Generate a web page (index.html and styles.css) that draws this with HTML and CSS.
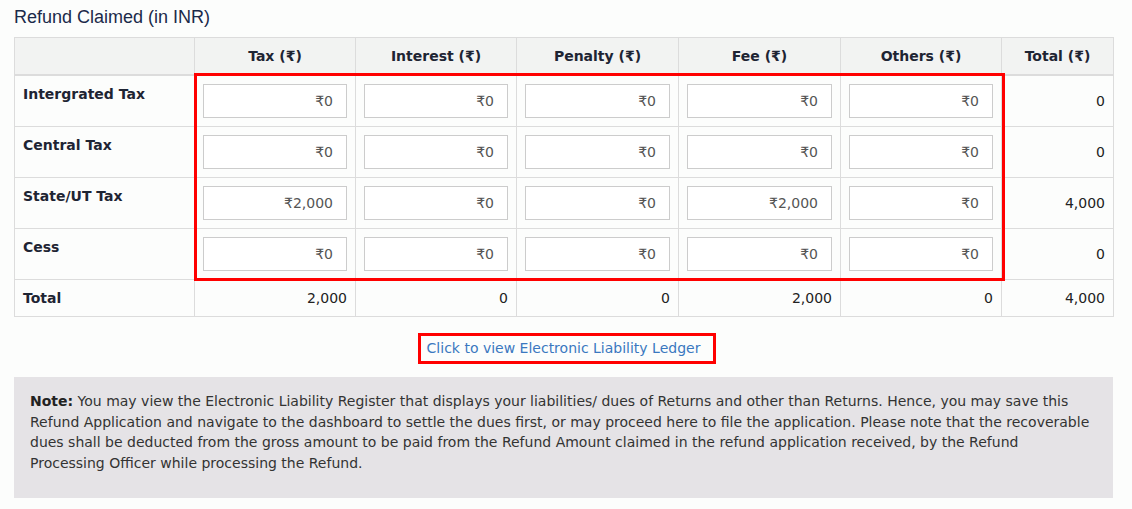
FILE: index.html
```html
<!DOCTYPE html>
<html>
<head>
<meta charset="utf-8">
<link rel="stylesheet" href="styles.css">
</head>
<body>
<div class="page">
  <h4 class="title">Refund Claimed (in INR)</h4>
  <div class="table-wrap">
    <table class="grid">
      <colgroup>
        <col class="c-label"><col class="c-amt"><col class="c-amt"><col class="c-amt2"><col class="c-amt2"><col class="c-amt"><col class="c-total">
      </colgroup>
      <thead>
        <tr><th></th><th>Tax (₹)</th><th>Interest (₹)</th><th>Penalty (₹)</th><th>Fee (₹)</th><th>Others (₹)</th><th>Total (₹)</th></tr>
      </thead>
      <tbody>
        <tr>
          <td class="lbl">Intergrated Tax</td>
          <td><input class="amt" value="₹0"></td><td><input class="amt" value="₹0"></td><td><input class="amt" value="₹0"></td><td><input class="amt" value="₹0"></td><td><input class="amt" value="₹0"></td>
          <td class="num">0</td>
        </tr>
        <tr>
          <td class="lbl">Central Tax</td>
          <td><input class="amt" value="₹0"></td><td><input class="amt" value="₹0"></td><td><input class="amt" value="₹0"></td><td><input class="amt" value="₹0"></td><td><input class="amt" value="₹0"></td>
          <td class="num">0</td>
        </tr>
        <tr>
          <td class="lbl">State/UT Tax</td>
          <td><input class="amt" value="₹2,000"></td><td><input class="amt" value="₹0"></td><td><input class="amt" value="₹0"></td><td><input class="amt" value="₹2,000"></td><td><input class="amt" value="₹0"></td>
          <td class="num">4,000</td>
        </tr>
        <tr>
          <td class="lbl">Cess</td>
          <td><input class="amt" value="₹0"></td><td><input class="amt" value="₹0"></td><td><input class="amt" value="₹0"></td><td><input class="amt" value="₹0"></td><td><input class="amt" value="₹0"></td>
          <td class="num">0</td>
        </tr>
        <tr class="total-row">
          <td class="lbl">Total</td>
          <td class="num">2,000</td><td class="num">0</td><td class="num">0</td><td class="num">2,000</td><td class="num">0</td><td class="num">4,000</td>
        </tr>
      </tbody>
    </table>
    <div class="highlight"></div>
  </div>
  <div class="link-row"><a class="ledger-link" href="#">Click to view Electronic Liability Ledger</a></div>
  <div class="note">
    <p><b>Note:</b> You may view the Electronic Liability Register that displays your liabilities/ dues of Returns and other than Returns. Hence, you may save this Refund Application and navigate to the dashboard to settle the dues first, or may proceed here to file the application. Please note that the recoverable dues shall be deducted from the gross amount to be paid from the Refund Amount claimed in the refund application received, by the Refund Processing Officer while processing the Refund.</p>
  </div>
</div>
</body>
</html>
```
FILE: styles.css
```css
html, body {
  margin: 0;
  padding: 0;
  background: #fcfdfc;
}
body {
  font-family: "DejaVu Sans", Verdana, sans-serif;
  font-size: 14px;
  color: #1e2433;
}
.page {
  width: 1099px;
  margin-left: 14px;
}
.title {
  margin: 0;
  padding-top: 7px;
  height: 37px;
  font-family: "Liberation Sans", Arial, sans-serif;
  font-weight: normal;
  font-size: 18px;
  line-height: 20px;
  color: #1b2a4a;
  box-sizing: border-box;
}
.table-wrap {
  position: relative;
}
.grid {
  width: 1099px;
  table-layout: fixed;
  border-collapse: collapse;
  border: 1px solid #dcdcdc;
}
.c-label { width: 180px; }
.c-amt { width: 161px; }
.c-amt2 { width: 162px; }
.c-total { width: 112px; }
.grid th, .grid td {
  border: 1px solid #dcdcdc;
  padding: 8px;
}
.grid th {
  background: #f2f3f2;
  font-weight: bold;
  text-align: center;
  border-bottom: 2px solid #dcdcdc;
  line-height: 20px;
  color: #1e2433;
}
.grid tbody td {
  line-height: 20px;
}
.grid td.lbl {
  vertical-align: top;
  font-weight: bold;
  padding-top: 8px;
}
.grid td.num {
  text-align: right;
  vertical-align: middle;
  color: #222;
}
.grid tr.total-row td {
  padding-top: 8px;
  padding-bottom: 8px;
  vertical-align: middle;
}
.amt {
  display: block;
  width: 100%;
  height: 34px;
  box-sizing: border-box;
  border: 1px solid #cccccc;
  background: #fff;
  text-align: right;
  padding: 0 13px 0 8px;
  font-family: "DejaVu Sans", Verdana, sans-serif;
  font-size: 14px;
  color: #555;
  margin: 0;
}
.highlight {
  position: absolute;
  left: 180px;
  top: 36px;
  width: 811px;
  height: 208px;
  border: 3px solid #ff0000;
  box-sizing: border-box;
  pointer-events: none;
}
.link-row {
  text-align: center;
  padding-top: 16px;
  height: 60px;
  box-sizing: border-box;
}
.ledger-link {
  display: inline-block;
  border: 3px solid #ff0000;
  padding: 3px 13px 3px 6px;
  margin-left: 7px;
  line-height: 19px;
  font-size: 14px;
  color: #3a78c0;
  text-decoration: none;
}
.note {
  background: #e5e3e6;
  padding: 14px 16px 25px 16px;
  box-sizing: border-box;
  height: 121px;
}
.note p {
  margin: 0;
  line-height: 20.6px;
  font-size: 14px;
  color: #333;
}
.note b {
  color: #222;
}
```
